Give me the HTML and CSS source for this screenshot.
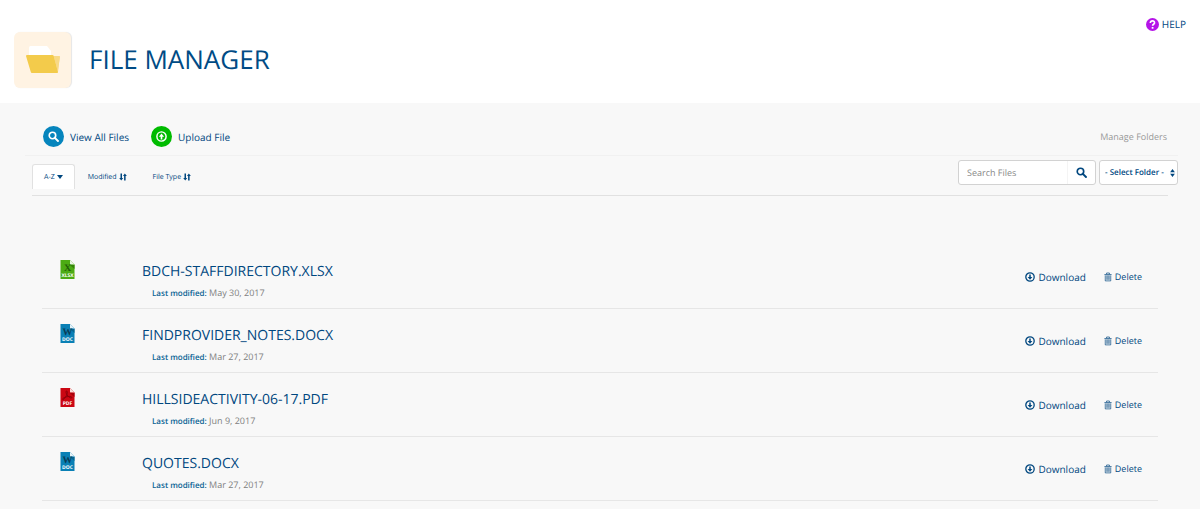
FILE: index.html
```
<!DOCTYPE html>
<html lang="en">
    <head>
        <meta charset="UTF-8" />
        <meta name="viewport" content="width=device-width, initial-scale=1.0" />
        <title>File Manager</title>
        <link rel="stylesheet" href="styles.css">
    </head>
    <body>
        <!-- shared icons -->
        <svg class="sprite" aria-hidden="true">
            <symbol id="search" viewBox="0 0 16 16">
                <circle cx="6.5" cy="6.5" r="4.7" fill="none" stroke="currentColor" stroke-width="2.4" />
                <path d="M10 10l4.500 4.500" stroke="currentColor" stroke-width="2.8" stroke-linecap="round" />
            </symbol>
            <symbol id="sort" viewBox="0 0 16 16">
                <path d="M3 1h3v9h2.400l-3.900 5L.4 10H3zM10.200 15h3V6h2.500l-4-5-3.700 5h2.200z" fill="currentColor" />
            </symbol>
            <symbol id="download" viewBox="0 0 16 16">
                <circle cx="8" cy="8" r="6.700" fill="none" stroke="currentColor" stroke-width="2.100" />
                <path d="M6.800 3.800h2.400v4h2.600L8 12.200 4.200 7.800h2.600z" fill="currentColor" />
            </symbol>
            <symbol id="trash" viewBox="0 0 14 16">
                <path d="M4.500 3V1h5v2M.700 3.600h12.600M2.200 5v9.800h9.600V5M5 5v8M7 5v8M9 5v8" fill="none" stroke="currentColor" stroke-width="1.200" />
            </symbol>
            <symbol id="file-doc" viewBox="0 0 14 19">
                <path d="M0 0h9.500L14 4.500V19H0z" fill="#0a80b5" />
                <path d="M9.500 0v4.500H14z" fill="#e4f1f7" />
                <path d="M9 4.800l5 .2v4z" fill="#05648f" />
                <text class="file-letter" x="7" y="11" fill="#093d58">W</text>
                <text class="file-ext" x="7" y="17">DOC</text>
            </symbol>
            <symbol id="file-xlsx" viewBox="0 0 14 19">
                <path d="M0 0h9.500L14 4.500V19H0z" fill="#4cab13" />
                <path d="M9.500 0v4.500H14z" fill="#eaf5e3" />
                <path d="M9 4.800l5 .2v4z" fill="#358407" />
                <text class="file-letter" x="7" y="11" fill="#1f5c05">X</text>
                <text class="file-ext" x="7" y="17">XLSX</text>
            </symbol>
            <symbol id="file-pdf" viewBox="0 0 14 19">
                <path d="M0 0h9.500L14 4.500V19H0z" fill="#cb0713" />
                <path d="M9.500 0v4.500H14z" fill="#f9dcd8" />
                <path d="M9 4.800l5 .2v4z" fill="#a8000b" />
                <path d="M6 3c1.500 0 .8 3-.4 5.200C4.600 10 2.800 12 2.200 11.400c-.8-1 3-2.700 5.600-2.900 2-.2 4 .3 3.500 1.200C10.300 11 6.300 8 5.600 4.700 5.400 3.700 5.500 3 6 3z" fill="none" stroke="#860009" stroke-width=".9" />
                <text class="file-ext" x="7" y="17">PDF</text>
            </symbol>
        </svg>

        <header class="page-header">
            <div class="folder-badge">
                <svg viewBox="0 0 34 28" aria-hidden="true">
                    <path d="M3 1.500Q3 0 4.500 0H21l4 5v10H3z" fill="#fff" />
                    <path d="M24 10h9q1 0 .9 1L31.500 27 26 24z" fill="#fbd98a" />
                    <path d="M0 10q0-1 1-1h25.500q1 0 1.200 1L32 26q0 1-1 1H6q-1 0-1.200-1z" fill="#f3cb4b" />
                    <path d="M27.700 10H33q1 0 .8 1L32 26z" fill="#f8d985" />
                </svg>
            </div>
            <h1>FILE MANAGER</h1>
            <a class="help" href="#">
                <svg viewBox="0 0 16 16" aria-hidden="true">
                    <circle cx="8" cy="8" r="8" fill="#b514e8" />
                    <path d="M5.300 6.200C5.500 2.600 10.700 2.800 10.500 6c-.1 1.700-2.400 1.700-2.400 3.600" fill="none" stroke="#fff" stroke-width="2" />
                    <path d="M7 11h2.200v2.200H7z" fill="#fff" />
                </svg>
                HELP
            </a>
        </header>

        <main>
            <nav class="actions">
                <a href="#">
                    <span class="round blue"><svg aria-hidden="true"><use href="#search" /></svg></span>
                    View All Files
                </a>
                <a href="#">
                    <span class="round green"><svg class="flip" aria-hidden="true"><use href="#download" /></svg></span>
                    Upload File
                </a>
                <a class="manage" href="#">Manage Folders</a>
            </nav>

            <div class="filter-bar">
                <button class="sort-btn active" type="button">A-Z <span class="caret"></span></button>
                <button class="sort-btn" type="button">Modified <svg aria-hidden="true"><use href="#sort" /></svg></button>
                <button class="sort-btn" type="button">File Type <svg aria-hidden="true"><use href="#sort" /></svg></button>
                <form class="search-form">
                    <div class="search-box">
                        <input type="text" placeholder="Search Files" aria-label="Search Files" />
                        <button type="submit" aria-label="Search"><svg aria-hidden="true"><use href="#search" /></svg></button>
                    </div>
                    <div class="folder-select">
                        <select aria-label="Select Folder">
                            <option>- Select Folder -</option>
                        </select>
                        <svg viewBox="0 0 6 10" aria-hidden="true"><path d="M3 0l3 4H0zM0 6h6l-3 4z" fill="currentColor" /></svg>
                    </div>
                </form>
            </div>

            <ul class="file-list">
                <li class="file">
                    <svg class="file-icon" aria-hidden="true"><use href="#file-xlsx" /></svg>
                    <div class="file-info">
                        <h2>BDCH-STAFFDIRECTORY.XLSX</h2>
                        <p><strong>Last modified:</strong> May 30, 2017</p>
                    </div>
                    <a class="download" href="#"><svg aria-hidden="true"><use href="#download" /></svg>Download</a>
                    <a class="delete" href="#"><svg aria-hidden="true"><use href="#trash" /></svg>Delete</a>
                </li>
                <li class="file">
                    <svg class="file-icon" aria-hidden="true"><use href="#file-doc" /></svg>
                    <div class="file-info">
                        <h2>FINDPROVIDER_NOTES.DOCX</h2>
                        <p><strong>Last modified:</strong> Mar 27, 2017</p>
                    </div>
                    <a class="download" href="#"><svg aria-hidden="true"><use href="#download" /></svg>Download</a>
                    <a class="delete" href="#"><svg aria-hidden="true"><use href="#trash" /></svg>Delete</a>
                </li>
                <li class="file">
                    <svg class="file-icon" aria-hidden="true"><use href="#file-pdf" /></svg>
                    <div class="file-info">
                        <h2>HILLSIDEACTIVITY-06-17.PDF</h2>
                        <p><strong>Last modified:</strong> Jun 9, 2017</p>
                    </div>
                    <a class="download" href="#"><svg aria-hidden="true"><use href="#download" /></svg>Download</a>
                    <a class="delete" href="#"><svg aria-hidden="true"><use href="#trash" /></svg>Delete</a>
                </li>
                <li class="file">
                    <svg class="file-icon" aria-hidden="true"><use href="#file-doc" /></svg>
                    <div class="file-info">
                        <h2>QUOTES.DOCX</h2>
                        <p><strong>Last modified:</strong> Mar 27, 2017</p>
                    </div>
                    <a class="download" href="#"><svg aria-hidden="true"><use href="#download" /></svg>Download</a>
                    <a class="delete" href="#"><svg aria-hidden="true"><use href="#trash" /></svg>Delete</a>
                </li>
            </ul>
        </main>
    </body>
</html>
```
FILE: styles.css
```
* {
    box-sizing: border-box;
}

body {
    margin: 0;
    background-color: #f8f8f8;
    color: #00477f;
    font-family: "Open Sans", "Liberation Sans", sans-serif;
    font-size: 10px;
    text-rendering: geometricPrecision;
}

a {
    color: inherit;
    text-decoration: none;
}

button,
input,
select {
    margin: 0;
    color: inherit;
    font-family: inherit;
    text-rendering: inherit;
}

.sprite {
    display: none;
}

/* header */
.page-header {
    display: flex;
    align-items: flex-start;
    padding: 16px 14px 14px;
    background-color: #fff;
}

.folder-badge {
    display: flex;
    align-items: center;
    justify-content: center;
    width: 57px;
    height: 56px;
    margin: 16px 0 1px;
    border-radius: 6px;
    background-color: #fff3e3;
    box-shadow: 1px 0 1px #e6e6e6;
}

.folder-badge svg {
    width: 34px;
    height: 28px;
}

.page-header h1 {
    margin: 24px 0 0 18px;
    font-size: 26px;
    font-weight: 500;
    line-height: 38px;
    color: #004b85;
}

.help {
    display: flex;
    align-items: center;
    gap: 3px;
    margin-left: auto;
    line-height: 16px;
}

.help svg {
    width: 13px;
    height: 13px;
}

/* top links */
.actions {
    display: flex;
    align-items: center;
    gap: 22px;
    margin: 0 22px 0 25px;
    padding: 23px 11px 8px 18px;
    border-bottom: 1px solid #f1f1f1;
}

.actions a {
    display: flex;
    align-items: center;
    gap: 6px;
}

.round {
    display: flex;
    align-items: center;
    justify-content: center;
    width: 21px;
    height: 21px;
    border-radius: 50%;
    color: #fff;
}

.round svg {
    width: 11px;
    height: 11px;
}

.round.blue {
    background-color: #0685bd;
}

.round.green {
    background-color: #0b0;
}

.flip {
    transform: rotate(180deg);
}

.actions .manage {
    margin-left: auto;
    font-size: 9px;
    color: #999;
}

/* sorting and search */
.filter-bar {
    display: flex;
    align-items: flex-start;
    margin: 0 32px;
    padding: 4px 0 6px;
    border-bottom: 1px solid #e1e1e1;
}

.sort-btn {
    display: flex;
    align-items: center;
    gap: 2px;
    height: 25px;
    margin-top: 4px;
    padding: 0 12px;
    border: 1px solid transparent;
    border-bottom: 0;
    border-radius: 3px 3px 0 0;
    background: none;
    font-size: 7px;
    cursor: pointer;
}

.sort-btn svg {
    width: 8px;
    height: 8px;
}

.sort-btn.active {
    padding: 0 11px;
    border-color: #e1e1e1;
    background-color: #fff;
}

.caret {
    border: 3px solid transparent;
    border-top: 4px solid currentColor;
    border-bottom: 0;
}

.search-form {
    display: flex;
    gap: 3px;
    margin: 0 -10px 0 auto;
}

.search-box {
    display: flex;
    width: 138px;
    height: 25px;
    border: 1px solid #d2d2d2;
    border-radius: 3px;
    background-color: #fff;
}

.search-box input {
    flex: 1;
    min-width: 0;
    padding: 0 8px;
    border: 0;
    background: none;
    font-size: 9px;
}

.search-box input::placeholder {
    color: #888;
}

.search-box button {
    display: flex;
    align-items: center;
    justify-content: center;
    width: 28px;
    padding: 0;
    border: 0;
    border-left: 1px solid #f4f4f4;
    background: none;
    cursor: pointer;
}

.search-box svg {
    width: 11px;
    height: 11px;
}

.folder-select {
    position: relative;
}

.folder-select select {
    appearance: none;
    width: 79px;
    height: 25px;
    padding: 0 0 0 5px;
    border: 1px solid #d2d2d2;
    border-radius: 3px;
    background-color: #fff;
    font-size: 8px;
    font-weight: 600;
}

.folder-select svg {
    position: absolute;
    top: 9px;
    right: 3px;
    width: 5px;
    height: 8px;
    pointer-events: none;
}

/* files */
.file-list {
    margin: 49px 42px 8px;
    padding: 0;
    list-style: none;
}

.file {
    display: flex;
    align-items: flex-start;
    height: 64px;
    padding: 15px 16px 0 18px;
    border-bottom: 1px solid #e6e6e6;
}

.file-icon {
    width: 15px;
    height: 19px;
    margin-right: 67px;
}

.file-letter {
    font-family: "Liberation Serif", serif;
    font-size: 10px;
    font-weight: bold;
    text-anchor: middle;
}

.file-ext {
    fill: #fff;
    font-size: 5px;
    font-weight: bold;
    text-anchor: middle;
}

.file-info {
    flex: 1;
}

.file-info h2 {
    margin: 2px 0 0;
    font-size: 14px;
    font-weight: 400;
    line-height: 20px;
}

.file-info p {
    margin: 4px 0 0 10px;
    font-size: 9px;
    line-height: 14px;
    color: #808080;
}

.file-info strong {
    font-size: 8px;
    font-weight: 600;
    color: #0a6394;
}

.download,
.delete {
    display: flex;
    align-items: center;
    gap: 3px;
    margin-top: 9px;
    line-height: 16px;
}

.download svg {
    width: 10px;
    height: 10px;
}

.delete {
    margin-left: 18px;
    font-size: 9px;
}

.delete svg {
    width: 8px;
    height: 10px;
}
```
